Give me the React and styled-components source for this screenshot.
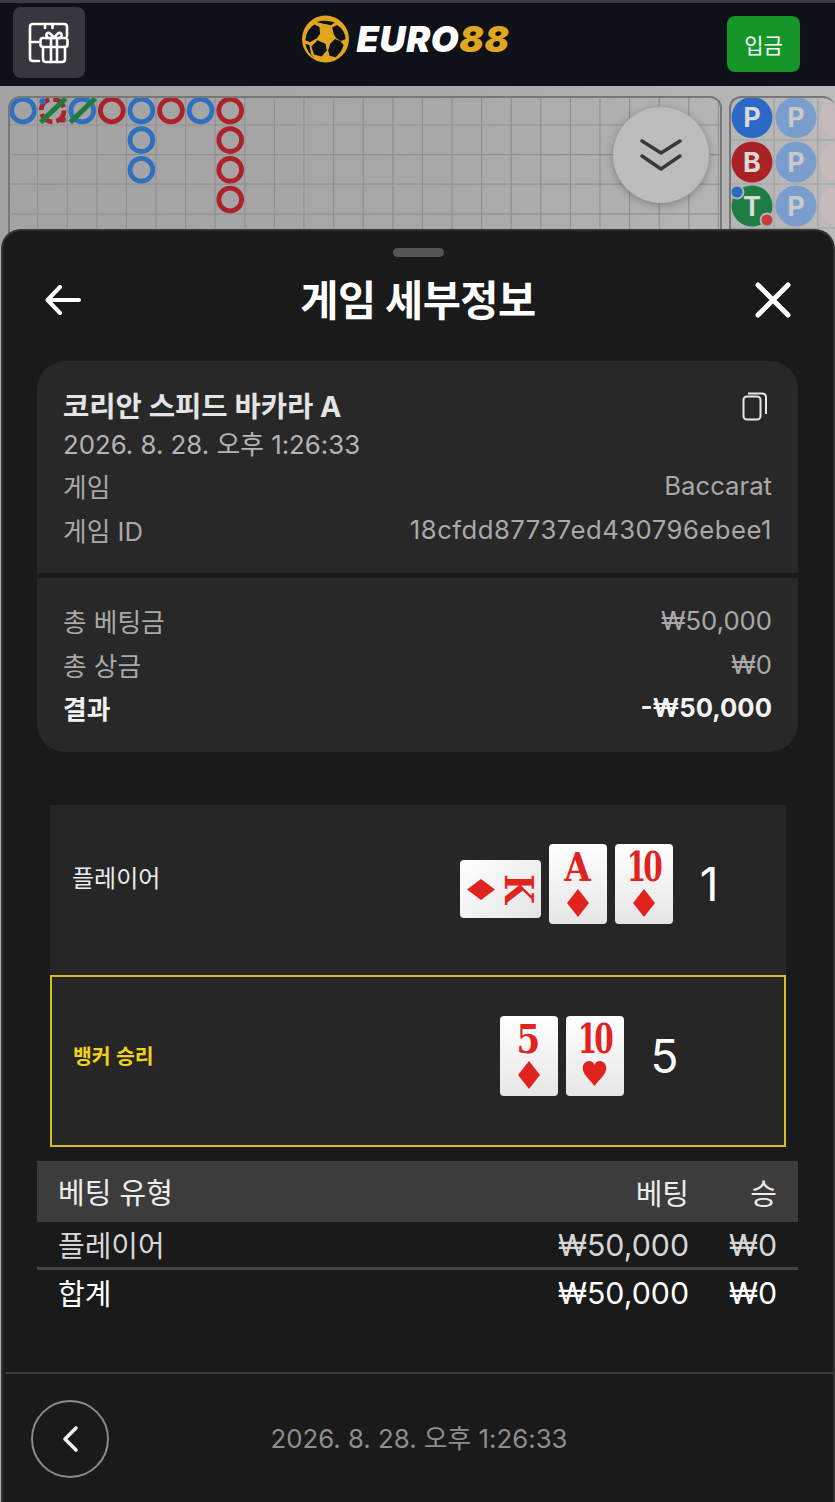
import React from "react";
import styled, { createGlobalStyle } from "styled-components";

const Global = createGlobalStyle`
  html, body { margin: 0; padding: 0; background: #1a1a1a; }
  * { box-sizing: border-box; }
  body { font-family: Inter, "Noto Sans CJK KR", sans-serif; }
`;

const Page = styled.div`
  position: relative;
  width: 835px;
  height: 1502px;
  overflow: hidden;
  background: #adadad;
`;

const TopBar = styled.header`
  height: 86px;
  background: #0e1117;
  border-top: 3px solid #3a3d47;
  display: flex;
  align-items: center;
  justify-content: space-between;
  padding: 0 35px 4px 13px;
`;

const GiftButton = styled.div`
  width: 72px;
  height: 71px;
  border-radius: 8px;
  background: #35383e;
  display: flex;
  align-items: center;
  justify-content: center;
`;

const Logo = styled.div`
  display: flex;
  align-items: center;
  gap: 8px;
  margin: 0 0 8px -1px;
`;

const LogoWord = styled.span`
  font-family: Inter, sans-serif;
  font-weight: 900;
  font-style: italic;
  font-size: 36px;
  letter-spacing: 0.6px;
  line-height: 1;
  color: #fff;
`;

const LogoAccent = styled.span`
  color: #e0a620;
`;

const DepositButton = styled.div`
  width: 73px;
  height: 56px;
  border-radius: 8px;
  background: #149629;
  color: #fff;
  font-size: 21px;
  display: flex;
  align-items: center;
  justify-content: center;
  margin-top: 2px;
`;

const RoadArea = styled.section`
  height: 160px;
  padding: 10px 0 0 8px;
  display: flex;
  gap: 7px;
  background: linear-gradient(90deg, #a3a3a3, #a7a7a7 50%, #b4b4b4 85%, #bbbbbb);
`;

const BoardFrame = styled.div`
  flex: ${(p) => (p.$wide ? "0 0 714px" : "1")};
  height: 170px;
  border: 2px solid #777;
  border-right: ${(p) => (p.$wide ? "2px solid #777" : "0")};
  border-radius: 12px 12px 0 0;
  overflow: hidden;
  svg { display: block; }
`;

const ScrollButton = styled.div`
  position: absolute;
  left: 613px;
  top: 107px;
  width: 96px;
  height: 96px;
  border-radius: 50%;
  background: #bcbcbc;
  box-shadow: 0 2px 10px rgba(0, 0, 0, 0.28);
  display: flex;
  align-items: center;
  justify-content: center;
`;

const Sheet = styled.section`
  position: absolute;
  left: 1px;
  right: 0;
  top: 229px;
  bottom: 0;
  background: #1a1a1a;
  border-radius: 20px 20px 0 0;
  border: 2px solid #333;
  border-bottom: 0;
  display: flex;
  flex-direction: column;
  padding: 17px 0 0;
`;

const Handle = styled.div`
  width: 51px;
  height: 9px;
  border-radius: 5px;
  background: #555;
  align-self: center;
`;

const SheetHeader = styled.div`
  height: 60px;
  margin-top: 13px;
  padding: 0 42px 0 42px;
  display: flex;
  align-items: center;
  justify-content: space-between;
`;

const SheetTitle = styled.h1`
  margin: 0;
  padding-top: 3px;
  font-size: 41.5px;
  font-weight: 700;
  line-height: 1;
  color: #fff;
  letter-spacing: -0.5px;
`;

const InfoBlock = styled.div`
  margin: 31px 35px 0 34px;
  display: flex;
  flex-direction: column;
  gap: 5px;
`;

const InfoCard = styled.div`
  background: #282828;
  padding: ${(p) => (p.$bottom ? "21px 26px 22px" : "25px 26px 22px")};
  border-radius: ${(p) => (p.$bottom ? "0 0 28px 28px" : "28px 28px 0 0")};
  height: ${(p) => (p.$bottom ? "174px" : "212px")};
`;

const CardTitleRow = styled.div`
  display: flex;
  justify-content: space-between;
  align-items: flex-start;
`;

const CopyIcon = styled.svg`
  margin: 5px 4px 0 0;
`;

const GameName = styled.div`
  font-size: 28.6px;
  font-weight: 700;
  line-height: 42px;
  color: #e4e4e4;
`;

const InfoDate = styled.div`
  font-size: 25.8px;
  line-height: 34px;
  margin-bottom: 2px;
  color: #b4b4b4;
`;

const InfoRow = styled.div`
  display: flex;
  justify-content: space-between;
  align-items: center;
  height: 43.5px;
  font-size: 25.7px;
  font-weight: ${(p) => (p.$strong ? 700 : 400)};
  color: ${(p) => (p.$strong ? "#f2f2f2" : "#a9a9a9")};
`;

const HashValue = styled.span`
  letter-spacing: 0.48px;
`;

const Hands = styled.div`
  margin: 53px 47px 0 47px;
`;

const HandRow = styled.div`
  height: ${(p) => (p.$winner ? "172px" : "170px")};
  background: #262626;
  border: ${(p) => (p.$winner ? "2px solid #d8bd1c" : "0")};
  display: grid;
  grid-template-columns: 1fr 392px;
  align-items: center;
  padding-left: ${(p) => (p.$winner ? "21px" : "22px")};
`;

const HandLabel = styled.div`
  font-size: ${(p) => (p.$winner ? "20.5px" : "24px")};
  font-weight: ${(p) => (p.$winner ? 600 : 400)};
  color: ${(p) => (p.$winner ? "#f2d21a" : "#ececec")};
  padding-bottom: ${(p) => (p.$winner ? "12px" : "27px")};
`;

const HandCards = styled.div`
  display: flex;
  justify-content: center;
  align-items: center;
  gap: 8px;
  padding: ${(p) => (p.$winner ? "0 0 10px 2px" : "0 2px 12px 0")};
`;

const PlayingCard = styled.div`
  width: 58px;
  height: 80px;
  border-radius: 4px;
  background: linear-gradient(180deg, #ffffff, #e6e6e6);
  color: #e0231f;
  display: flex;
  flex-direction: column;
  align-items: center;
  justify-content: flex-start;
  gap: 1px;
  padding-top: 2px;
`;

const SideCard = styled.div`
  width: 81px;
  height: 58px;
  margin-top: 10px;
  border-radius: 4px;
  background: linear-gradient(135deg, #ffffff, #e4e4e4);
  color: #e0231f;
  display: flex;
  align-items: center;
  justify-content: center;
  gap: 9px;
`;

const Rank = styled.span`
  font-family: "DejaVu Serif Condensed", "DejaVu Serif", serif;
  font-weight: 700;
  font-size: 38px;
  letter-spacing: ${(p) => (p.$ten ? "-3.5px" : "0")};
  line-height: 42px;
  height: 42px;
  transform: ${(p) => (p.$ten ? "scale(0.82, 1.08)" : "scale(1, 1.05)")};
`;

const SideRank = styled(Rank)`
  transform: rotate(90deg) scale(1, 1.05);
`;

const Score = styled.div`
  font-size: 46px;
  font-weight: 400;
  color: #fff;
  margin-left: 19px;
  line-height: 1;
`;

const BetTable = styled.div`
  margin: 14px 35px 0 34px;
`;

const BetRow = styled.div`
  display: grid;
  grid-template-columns: 1fr auto 88px;
  align-items: center;
  padding: 0 21px;
  height: ${(p) => p.$h}px;
  background: ${(p) => p.$bg || "transparent"};
  border-bottom: ${(p) => (p.$line ? "3px solid #444" : "0")};
  font-size: 29px;
  color: ${(p) => p.$color || "#fff"};
`;

const NameCell = styled.div`
  padding-bottom: 2px;
`;

const RightCell = styled.div`
  text-align: right;
`;

const MoneyCell = styled(RightCell)`
  font-size: 30.3px;
`;

const Footer = styled.footer`
  margin-top: auto;
  height: 130px;
  border-top: 2px solid #3b3b3b;
  margin-left: 2px;
  position: relative;
  display: flex;
  align-items: center;
  justify-content: center;
`;

const RoundBack = styled.div`
  position: absolute;
  left: 26px;
  top: 26px;
  width: 78px;
  height: 78px;
  border-radius: 50%;
  border: 2px solid #8a8a8a;
  display: flex;
  align-items: center;
  justify-content: center;
`;

const FooterDate = styled.div`
  font-size: 25.8px;
  color: #8e8e8e;
  padding-bottom: 3px;
`;

const Diamond = ({ w = 22, h = 28 }) => (
  <svg width={w} height={h} viewBox="0 0 22 28" preserveAspectRatio="none"><path d="M11 0 L22 14 L11 28 L0 14 Z" fill="#e0231f" /></svg>
);
const SideDiamond = () => (
  <svg width="28" height="21" viewBox="0 0 28 21"><path d="M0 10.5 L14 0 L28 10.5 L14 21 Z" fill="#e0231f" /></svg>
);
const Heart = () => (
  <svg width="25" height="25" viewBox="0 0 34 32" preserveAspectRatio="none"><path d="M17 32 C12 25 1 18 1 9 C1 3 6 0 10 0 C13 0 16 2 17 5 C18 2 21 0 24 0 C28 0 33 3 33 9 C33 18 22 25 17 32 Z" fill="#e0231f" /></svg>
);

const GiftIcon = () => (
  <svg width="42" height="42" viewBox="0 0 42 42" fill="none" stroke="#fff" strokeWidth="2.6" strokeLinecap="round" strokeLinejoin="round">
    <path d="M2 20 V5 Q2 2 5 2 H36 Q39 2 39 5 V14" />
    <path d="M17 2 V6 M24.5 2 V6" />
    <path d="M2 20 H10" />
    <path d="M2 20 V36 Q2 39 5 39 H11" />
    <rect x="12.5" y="16" width="27" height="9" rx="2.5" />
    <path d="M15 25 V37 Q15 40 18 40 H34 Q37 40 37 37 V25" />
    <path d="M23 16 V40 M29 16 V40" />
    <path d="M26 16 Q22 10 19.5 11 Q17 13 20 16 M26 16 Q30 10 32.5 11 Q35 13 32 16" />
  </svg>
);

const LogoBall = () => (
  <svg width="47" height="48" viewBox="18 8 140 140">
    <circle cx="88" cy="78" r="70" fill="#e0a620" />
    <path d="M62 27 Q88 19 116 29 L104 37 L76 31 Z" fill="#0e1117" />
    <path d="M55 35 L70 42 L72 62 L62 76 L42 88 L28 82 Q30 50 55 35 Z" fill="#0e1117" />
    <path d="M122 36 L108 44 L112 62 L120 76 L134 84 L148 78 Q146 50 122 36 Z" fill="#0e1117" />
    <path d="M64 82 L88 92 L92 112 L76 130 L54 124 L46 100 Z" fill="#0e1117" />
    <path d="M116 78 L132 84 L142 96 Q136 118 118 132 L100 128 L96 112 L102 92 Z" fill="#0e1117" />
    <path d="M28 92 L40 96 L46 126 L58 136 Q34 122 28 92 Z" fill="#0e1117" />
  </svg>
);

const rings = [
  [0, 0, "#2f6fbf"], [2, 0, "#2f6fbf"], [3, 0, "#ad222a"], [4, 0, "#2f6fbf"],
  [5, 0, "#ad222a"], [6, 0, "#2f6fbf"], [7, 0, "#ad222a"], [1, 0, "#ad222a"],
  [4, 1, "#2f6fbf"], [4, 2, "#2f6fbf"], [7, 1, "#ad222a"], [7, 2, "#ad222a"], [7, 3, "#ad222a"],
];

const BigRoad = () => {
  const cw = 29.6;
  const v = Array.from({ length: 24 }, (_, i) => 27.6 + i * cw);
  const h = [27, 56.6, 86.2, 115.8];
  const cx = (i) => 13 + i * cw;
  const cy = (j) => 12.4 + j * 29.7;
  return (
    <svg width="710" height="170" viewBox="0 0 710 170">
      {v.map((x) => <line key={x} x1={x} y1="0" x2={x} y2="170" stroke="#909090" strokeWidth="1.2" />)}
      {h.map((y) => <line key={y} x1="0" y1={y} x2="710" y2={y} stroke="#909090" strokeWidth="1.2" />)}
      {rings.map(([i, j, c]) => (
        <circle key={`${i}-${j}`} cx={cx(i)} cy={cy(j)} r="11.4" fill="none" stroke={c} strokeWidth="4.8"
          strokeDasharray={i === 1 ? "14 4" : undefined} />
      ))}
      <circle cx={cx(1) - 10} cy={cy(0) - 9} r="3.2" fill="#2f6fbf" />
      <circle cx={cx(1) + 10} cy={cy(0) + 9} r="3.2" fill="#ad222a" />
      <line x1={cx(1) - 12} y1={cy(0) + 12} x2={cx(1) + 13} y2={cy(0) - 12} stroke="#1c7d3e" strokeWidth="5" />
      <line x1={cx(2) - 12} y1={cy(0) + 12} x2={cx(2) + 13} y2={cy(0) - 12} stroke="#1c7d3e" strokeWidth="5" />
    </svg>
  );
};

const beadText = { fontFamily: "Inter, sans-serif", fontWeight: 700, fontSize: 27, textAnchor: "middle" };

const BeadRoad = () => (
  <svg width="120" height="170" viewBox="0 0 120 170">
    {[43, 87].map((x) => <line key={x} x1={x} y1="0" x2={x} y2="170" stroke="#a0a0a0" strokeWidth="1.2" />)}
    {[42, 86, 130].map((y) => <line key={y} x1="0" y1={y} x2="120" y2={y} stroke="#a0a0a0" strokeWidth="1.2" />)}
    <circle cx="21" cy="19.5" r="20.5" fill="#2a69c6" />
    <text x="21" y="29" fill="#d9d9d9" style={beadText}>P</text>
    <circle cx="21" cy="64" r="20.5" fill="#aa2226" />
    <text x="21" y="74" fill="#d9d9d9" style={beadText}>B</text>
    <circle cx="21" cy="108" r="20.5" fill="#1d7d42" />
    <text x="21" y="118" fill="#d9d9d9" style={beadText}>T</text>
    <circle cx="6" cy="94" r="7.5" fill="#b4b4b4" />
    <circle cx="6" cy="94" r="5.5" fill="#2a69c6" />
    <circle cx="36" cy="122" r="7.5" fill="#b4b4b4" />
    <circle cx="36" cy="122" r="5.5" fill="#c93a3f" />
    {[19.5, 64, 108].map((y) => (
      <g key={y}>
        <circle cx="65" cy={y} r="20.5" fill="#7a9dcd" />
        <text x="65" y={y + 9.5} fill="#c9c9c9" style={beadText}>P</text>
        <circle cx="109" cy={y} r="20.5" fill="#c6baba" />
      </g>
    ))}
  </svg>
);

export default function App() {
  return (
    <Page>
      <Global />
      <TopBar>
        <GiftButton><GiftIcon /></GiftButton>
        <Logo>
          <LogoBall />
          <LogoWord>EURO<LogoAccent>88</LogoAccent></LogoWord>
        </Logo>
        <DepositButton>입금</DepositButton>
      </TopBar>
      <RoadArea>
        <BoardFrame $wide><BigRoad /></BoardFrame>
        <BoardFrame><BeadRoad /></BoardFrame>
      </RoadArea>
      <ScrollButton>
        <svg width="42" height="34" viewBox="0 0 42 34" fill="none" stroke="#383838" strokeWidth="3.4" strokeLinecap="round" strokeLinejoin="round">
          <path d="M2 3 L21 15 L40 3" />
          <path d="M2 18 L21 31 L40 18" />
        </svg>
      </ScrollButton>

      <Sheet>
        <Handle />
        <SheetHeader>
          <svg width="36" height="30" viewBox="0 0 36 30" fill="none" stroke="#fff" strokeWidth="4" strokeLinecap="round" strokeLinejoin="round">
            <path d="M34 15 H3 M15 2 L2.5 15 L15 28" />
          </svg>
          <SheetTitle>게임 세부정보</SheetTitle>
          <svg width="36" height="36" viewBox="0 0 36 36" fill="none" stroke="#fff" strokeWidth="5" strokeLinecap="round">
            <path d="M3 3 L33 33 M33 3 L3 33" />
          </svg>
        </SheetHeader>

        <InfoBlock>
          <InfoCard>
            <CardTitleRow>
              <GameName>코리안 스피드 바카라 A</GameName>
              <CopyIcon width="26" height="30" viewBox="0 0 26 30" fill="none" stroke="#e8e8e8" strokeWidth="2">
                <rect x="1.5" y="5.5" width="17" height="23" rx="3.5" />
                <path d="M6 2.5 H20 Q24 2.5 24 6.5 V23" />
              </CopyIcon>
            </CardTitleRow>
            <InfoDate>2026. 8. 28. 오후 1:26:33</InfoDate>
            <InfoRow><span>게임</span><span>Baccarat</span></InfoRow>
            <InfoRow><span>게임 ID</span><HashValue>18cfdd87737ed430796ebee1</HashValue></InfoRow>
          </InfoCard>
          <InfoCard $bottom>
            <InfoRow><span>총 베팅금</span><span>₩50,000</span></InfoRow>
            <InfoRow><span>총 상금</span><span>₩0</span></InfoRow>
            <InfoRow $strong><span>결과</span><span>-₩50,000</span></InfoRow>
          </InfoCard>
        </InfoBlock>

        <Hands>
          <HandRow>
            <HandLabel>플레이어</HandLabel>
            <HandCards>
              <SideCard><SideDiamond /><SideRank>K</SideRank></SideCard>
              <PlayingCard><Rank>A</Rank><Diamond /></PlayingCard>
              <PlayingCard><Rank $ten>10</Rank><Diamond /></PlayingCard>
              <Score>1</Score>
            </HandCards>
          </HandRow>
          <HandRow $winner>
            <HandLabel $winner>뱅커 승리</HandLabel>
            <HandCards $winner>
              <PlayingCard><Rank>5</Rank><Diamond /></PlayingCard>
              <PlayingCard><Rank $ten>10</Rank><Heart /></PlayingCard>
              <Score>5</Score>
            </HandCards>
          </HandRow>
        </Hands>

        <BetTable>
          <BetRow $h={61} $bg="#3c3c3c" $color="#ececec">
            <NameCell>베팅 유형</NameCell><RightCell>베팅</RightCell><RightCell>승</RightCell>
          </BetRow>
          <BetRow $h={48} $line $color="#d6d6d6">
            <NameCell>플레이어</NameCell><MoneyCell>₩50,000</MoneyCell><MoneyCell>₩0</MoneyCell>
          </BetRow>
          <BetRow $h={46}>
            <NameCell>합계</NameCell><MoneyCell>₩50,000</MoneyCell><MoneyCell>₩0</MoneyCell>
          </BetRow>
        </BetTable>

        <Footer>
          <RoundBack>
            <svg width="18" height="28" viewBox="0 0 18 28" fill="none" stroke="#f0f0f0" strokeWidth="3.6" strokeLinecap="round" strokeLinejoin="round">
              <path d="M15 3 L4 14 L15 25" />
            </svg>
          </RoundBack>
          <FooterDate>2026. 8. 28. 오후 1:26:33</FooterDate>
        </Footer>
      </Sheet>
    </Page>
  );
}
